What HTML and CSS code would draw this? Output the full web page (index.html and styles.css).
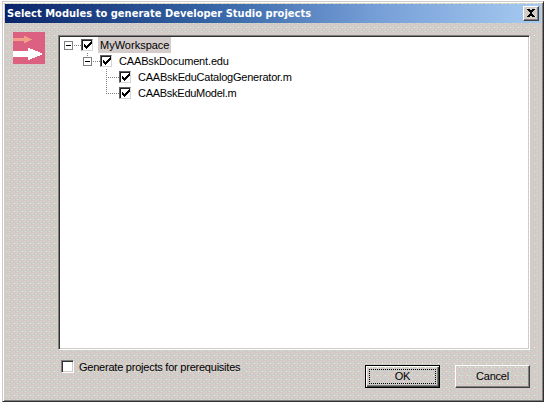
FILE: index.html
```html
<!DOCTYPE html>
<html lang="en">
<head>
<meta charset="utf-8">
<title>Select Modules to generate Developer Studio projects</title>
<link rel="stylesheet" href="styles.css">
</head>
<body>
<svg class="defs" width="0" height="0" aria-hidden="true">
  <symbol id="check" viewBox="0 0 8 8"><path d="M0 3h1v1h1v1h1v-1h1v-1h1v-1h1v-1h1v-1h1v3h-1v1h-1v1h-1v1h-1v1h-1v1h-1v-1h-1v-1h-1z"/></symbol>
</svg>
<main class="window">
  <header class="titlebar">
    <h1 class="fit title">Select Modules to generate Developer Studio projects</h1>
    <button class="close" aria-label="Close"><svg width="8" height="8" viewBox="0 0 8 8" shape-rendering="crispEdges"><path d="M0 0h3v1h2v-1h3v1h-1v1h-1v1h-1v2h1v1h1v1h1v1h-3v-1h-2v1h-3v-1h1v-1h1v-1h1v-2h-1v-1h-1v-1h-1z"/></svg></button>
  </header>
  <div class="content">
    <svg class="app-icon" width="32" height="32" viewBox="0 0 32 32" shape-rendering="crispEdges">
      <path fill="#dc6080" d="M0 0h32v32h-32z"/>
      <path fill="#f0a088" d="M0 6h11v-2h2v1h2v1h2v1h2v1h-2v1h-2v1h-2v1h-2v-2h-11z"/>
      <path fill="#fff" d="M0 19h15v-3h2v1h3v1h2v1h3v1h2v1h2v2h-2v1h-3v1h-2v1h-3v1h-2v1h-2v-3h-15z"/>
    </svg>
    <section class="tree">
      <div class="row"><i class="expander"></i><i class="link"></i><i class="check"><svg><use href="#check"/></svg></i><span class="label selected"><span class="fit workspace">MyWorkspace</span></span></div>
      <div class="row level1"><i class="expander"></i><i class="link"></i><i class="check"><svg><use href="#check"/></svg></i><span class="label"><span class="fit document">CAABskDocument.edu</span></span></div>
      <div class="row level2"><i class="branch"></i><i class="check"><svg><use href="#check"/></svg></i><span class="label"><span class="fit catalog">CAABskEduCatalogGenerator.m</span></span></div>
      <div class="row level2 last"><i class="branch"></i><i class="check"><svg><use href="#check"/></svg></i><span class="label"><span class="fit model">CAABskEduModel.m</span></span></div>
    </section>
  </div>
  <footer class="footer">
    <label class="option"><i class="check large"></i><span class="fit prerequisites">Generate projects for prerequisites</span></label>
    <button class="button default"><span class="focus">OK</span></button>
    <button class="button">Cancel</button>
  </footer>
</main>
</body>
</html>
```
FILE: styles.css
```css
* { box-sizing: border-box; }
body { margin: 0; padding: 1px 0 0 2px; background: #fff; font: 11px/16px "Liberation Sans", Arial, sans-serif; color: #000; overflow: hidden; }
.defs { position: absolute; }
.window, .close, .button {
  background-color: #cfcbc9;
  background-image:
    conic-gradient(from 270deg at 1px 1px, #f8f8c4 25%, transparent 0),
    conic-gradient(from 270deg at 1px 1px, #f8c9c7 25%, transparent 0),
    conic-gradient(from 270deg at 1px 1px, #c8f0c7 25%, transparent 0);
  background-size: 8px 8px, 4px 4px, 8px 4px;
  background-position: 3px 1px, 1px 3px, 6px 1px;
}
.window { width: 542px; height: 401px; border: 1px solid; border-color: #d0ccc8 #303030 #303030 #d0ccc8; box-shadow: inset 1px 1px #fff, inset -1px -1px #808080; padding: 2px; }
.titlebar { height: 19px; display: flex; align-items: center; justify-content: space-between; padding: 0 2px; background: linear-gradient(90deg, #0a246a, #3868a8 40%, #78a0d8 70%, #a6caf0); }
.fit { display: inline-block; white-space: nowrap; }
.title { margin: 0; font: bold 11px/19px "DejaVu Sans Condensed", "DejaVu Sans", sans-serif; font-stretch: condensed; color: #fff; letter-spacing: .03px; }
.close { width: 16px; height: 15px; padding: 2px 0 0 3px; border: 1px solid; border-color: #fff #404040 #404040 #fff; box-shadow: inset -1px -1px #808080; display: flex; align-items: flex-start; }
.content { display: flex; padding: 12px 11px 0 8px; }
.app-icon { margin: -3px 13px 0 0; flex: none; }
.tree { width: 473px; height: 315px; background: #fff; border: 1px solid; border-color: #808080 #fff #fff #808080; box-shadow: inset 1px 1px #303030, inset -1px -1px #d0ccc8; padding: 1px 1px 1px 5px; }
.row { height: 16px; display: flex; align-items: center; }
.level1 { padding-left: 19px; background: repeating-linear-gradient(#808080 0 1px, transparent 1px 2px) 23px 0 / 1px 4px no-repeat; }
.level2 { padding-left: 42px; }
.expander { width: 9px; height: 9px; border: 1px solid #808080; background: linear-gradient(#000, #000) center / 5px 1px no-repeat; }
.link { width: 8px; height: 1px; background: repeating-linear-gradient(90deg, transparent 0 1px, #808080 1px 2px); }
.branch { width: 13px; height: 16px; background: repeating-linear-gradient(#808080 0 1px, transparent 1px 2px) 0 0 / 1px 100% no-repeat, repeating-linear-gradient(90deg, #808080 0 1px, transparent 1px 2px) 0 8px / 100% 1px no-repeat; }
.last .branch { background-size: 1px 9px, 100% 1px; }
.check { width: 12px; height: 12px; flex: none; border: 1px solid; border-color: #606060 #d8d4d0 #d8d4d0 #606060; box-shadow: inset 1px 1px #202020; background: #fff; padding: 1px 0 0 2px; display: block; }
.check svg { width: 8px; height: 8px; display: block; shape-rendering: crispEdges; }
.check.large { width: 13px; height: 13px; border-color: #808080 #fff #fff #808080; box-shadow: inset 1px 1px #303030, inset -1px -1px #d0ccc8; }
.label { height: 16px; line-height: 16px; margin-left: 5px; padding: 0 2px; }
.selected { background: #d4cccb; width: 73px; }
.document { letter-spacing: -.15px; }
.catalog { letter-spacing: -.22px; }
.model { letter-spacing: -.27px; }
.prerequisites { letter-spacing: -.23px; }
.footer { display: flex; padding: 15px 11px 0 56px; }
.option { display: flex; height: 13px; width: 304px; margin-top: -5px; gap: 5px; line-height: 14px; }
.button { width: 75px; height: 23px; padding: 0 0 2px; border: 1px solid; border-color: #fff #404040 #404040 #fff; box-shadow: inset -1px -1px #808080; font: inherit; color: #000; letter-spacing: -.2px; }
.button.default { margin-right: 15px; padding: 2px; border-color: #000; box-shadow: inset 1px 1px #fff, inset -1px -1px #404040, inset -2px -2px #808080; }
.focus { display: block; width: 67px; height: 15px; margin: 0 0 0 1px; border: 1px dotted #000; line-height: 12px; }
```
